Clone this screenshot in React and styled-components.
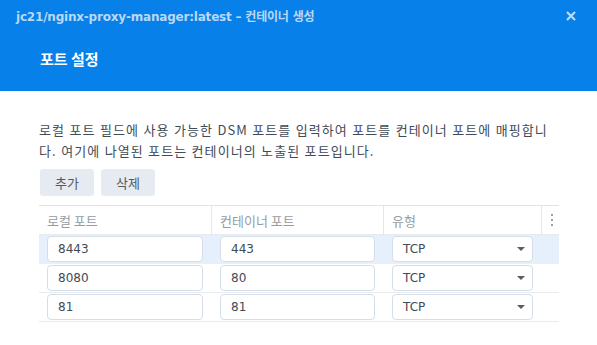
import React from 'react'
import styled, { createGlobalStyle } from 'styled-components'

const GlobalStyle = createGlobalStyle`
  html, body {
    margin: 0;
    padding: 0;
    background: #ffffff;
  }
  body {
    font-family: "DejaVu Sans", "Noto Sans CJK KR", sans-serif;
  }
  * { box-sizing: border-box; }
`

const WindowStyled = styled.div`
  width: 597px;
  height: 345px;
  background: #fff;
  overflow: hidden;
`

const HeaderStyled = styled.div`
  height: 91px;
  background: #0780e9;
  display: flex;
  flex-direction: column;

  .header {
    &-bar {
      display: flex;
      justify-content: space-between;
      align-items: center;
      height: 31px;
      padding: 0 21px 0 16px;
    }

    &-title {
      margin: 0;
      font-size: 12px;
      font-weight: bold;
      color: #b9d8f7;
      letter-spacing: -0.2px;
    }

    &-close {
      display: flex;
      color: #c4def8;
    }

    &-step {
      margin: 0;
      padding: 17px 40px 0;
      font-size: 15px;
      font-weight: bold;
      color: #ffffff;
      font-family: "Noto Sans CJK KR", sans-serif;
    }
  }
`

const BodyStyled = styled.div`
  padding: 28px 38px 0 39px;
`

const Description = styled.p`
  margin: 0;
  font-family: "Noto Sans CJK KR", sans-serif;
  font-size: 13px;
  line-height: 21px;
  letter-spacing: 1.05px;
  word-spacing: 0.5px;
  color: #414b55;
`

const ButtonGroupStyled = styled.div`
  display: flex;
  gap: 7px;
  margin-top: 8px;
  padding-left: 1px;
`

const Button = styled.button`
  height: 27px;
  padding: 0 15px;
  border: none;
  border-radius: 3px;
  background: #e6ebf2;
  color: #505a64;
  font-family: "Noto Sans CJK KR", sans-serif;
  font-size: 13px;
`

const Table = styled.div`
  margin-top: 9px;
  width: 520px;
  border-top: 1px solid #dbe3eb;
`

const Row = styled.div`
  display: grid;
  grid-template-columns: 173px 172px 158px 17px;
  height: 29px;
  background: ${p => (p.$selected ? '#e5f0fc' : 'transparent')};
  border-bottom: 1px solid ${p => (p.$selected ? '#e5f0fc' : '#e6ebf0')};
`

const HeadCell = styled.div`
  display: flex;
  align-items: center;
  padding-left: 8px;
  font-family: "Noto Sans CJK KR", sans-serif;
  font-size: 13px;
  color: #969ca3;
  border-right: ${p => (p.$last ? 'none' : '1px solid #e3e8ee')};
`

const Cell = styled.div`
  display: flex;
  align-items: center;
  padding: 0 9px 0 8px;
`

const Field = styled.div`
  flex: 1;
  height: 26px;
  display: flex;
  align-items: center;
  justify-content: space-between;
  padding: 0 10px;
  background: #fff;
  border: 1px solid #d5dee8;
  border-radius: 4px;
  font-family: "DejaVu Sans", sans-serif;
  font-size: 12px;
  color: #414b55;
`

const Caret = styled.span`
  width: 0;
  height: 0;
  border-left: 4px solid transparent;
  border-right: 4px solid transparent;
  border-top: 4px solid #555d66;
  margin-right: -3px;
`

const Dots = () => (
  <svg width="4" height="12" viewBox="0 0 4 12">
    <rect x="1" y="0" width="2" height="2" fill="#9aa1a8" />
    <rect x="1" y="5" width="2" height="2" fill="#9aa1a8" />
    <rect x="1" y="10" width="2" height="2" fill="#9aa1a8" />
  </svg>
)

const ports = [
  { local: '8443', container: '443', type: 'TCP', selected: true },
  { local: '8080', container: '80', type: 'TCP' },
  { local: '81', container: '81', type: 'TCP' },
]

export default function App() {
  return (
    <>
      <GlobalStyle />
      <WindowStyled>
        <HeaderStyled>
          <div className='header-bar'>
            <p className='header-title'>jc21/nginx-proxy-manager:latest – 컨테이너 생성</p>
            <span className='header-close'>
              <svg width="10" height="10" viewBox="0 0 10 10">
                <path d="M1 1 L9 9 M9 1 L1 9" stroke="currentColor" strokeWidth="2" />
              </svg>
            </span>
          </div>
          <p className='header-step'>포트 설정</p>
        </HeaderStyled>
        <BodyStyled>
          <Description>
            로컬 포트 필드에 사용 가능한 DSM 포트를 입력하여 포트를 컨테이너 포트에 매핑합니다. 여기에 나열된 포트는 컨테이너의 노출된 포트입니다.
          </Description>
          <ButtonGroupStyled>
            <Button>추가</Button>
            <Button>삭제</Button>
          </ButtonGroupStyled>
          <Table>
            <Row>
              <HeadCell>로컬 포트</HeadCell>
              <HeadCell>컨테이너 포트</HeadCell>
              <HeadCell>유형</HeadCell>
              <HeadCell $last><Dots /></HeadCell>
            </Row>
            {ports.map(p => (
              <Row key={p.local} $selected={p.selected}>
                <Cell><Field>{p.local}</Field></Cell>
                <Cell><Field>{p.container}</Field></Cell>
                <Cell><Field>{p.type}<Caret /></Field></Cell>
                <Cell />
              </Row>
            ))}
          </Table>
        </BodyStyled>
      </WindowStyled>
    </>
  )
}
